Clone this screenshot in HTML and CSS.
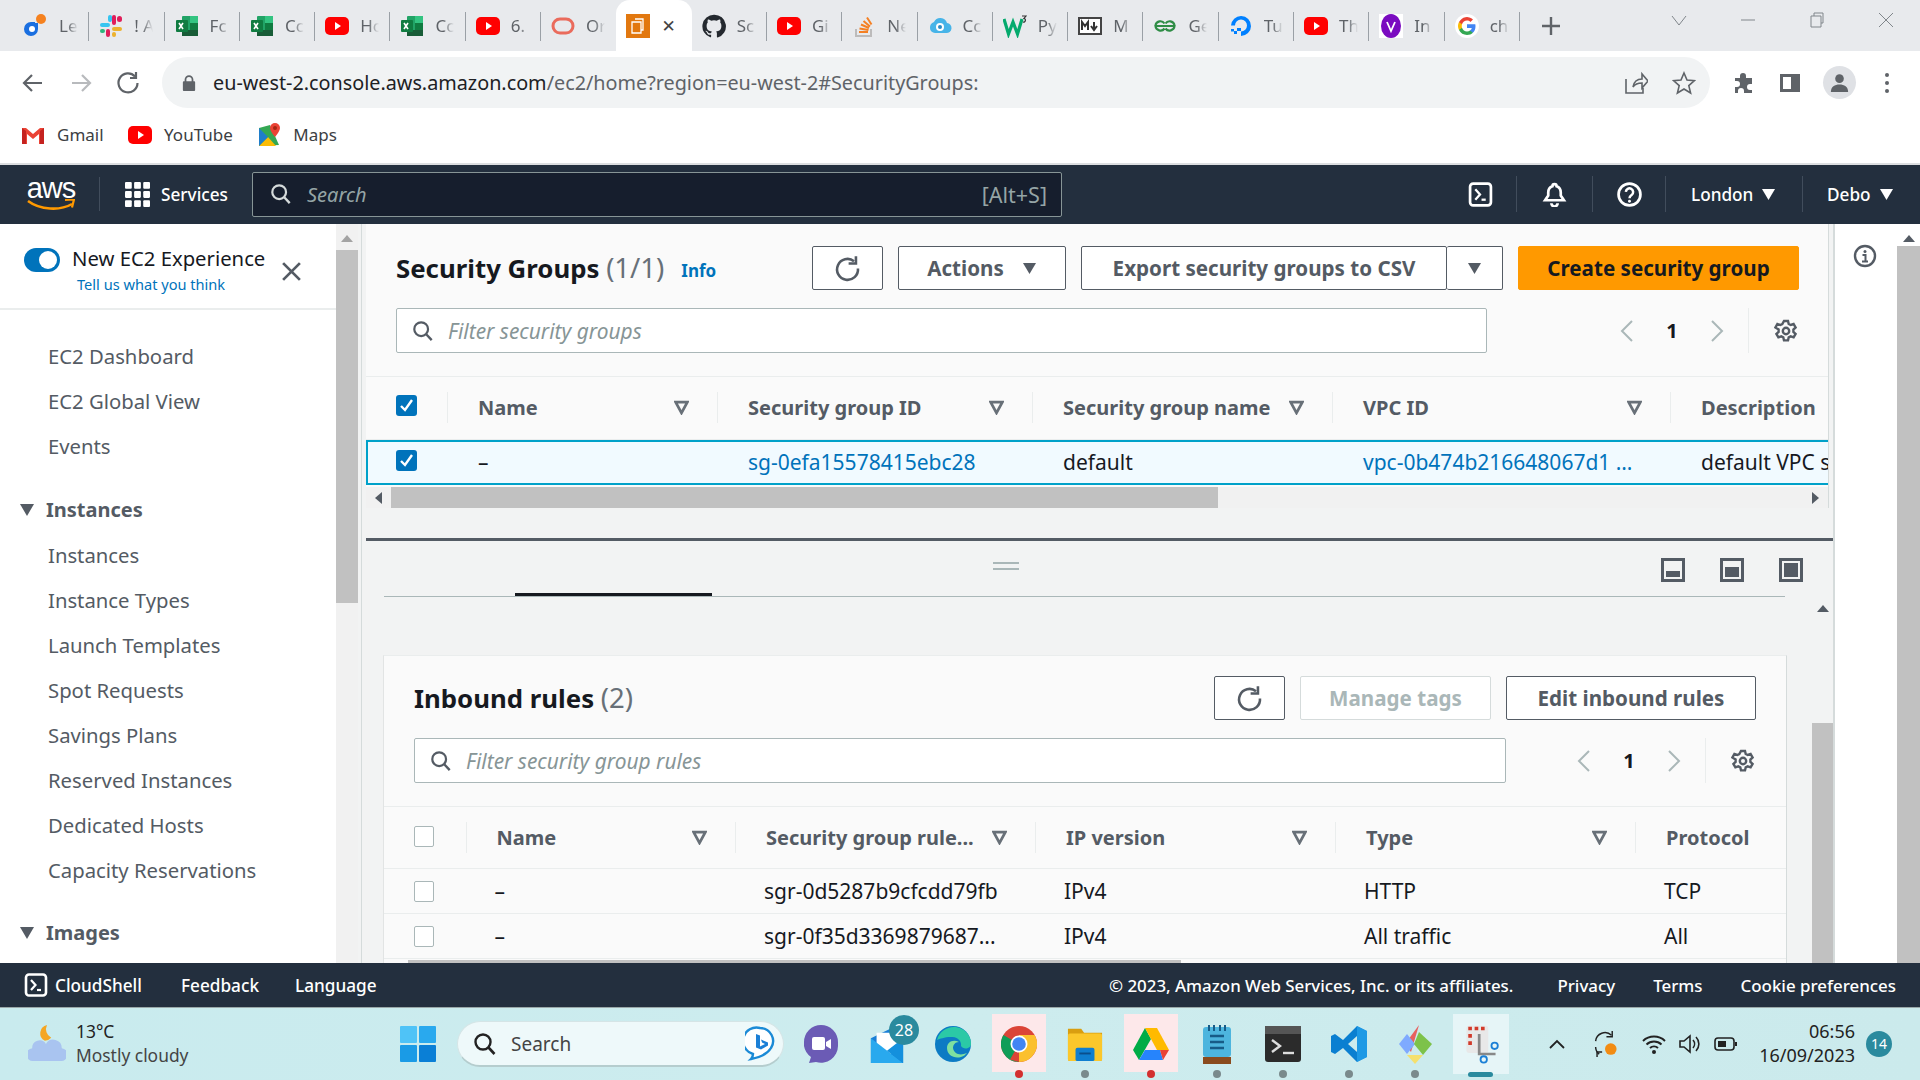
FILE: index.html
```html
<!DOCTYPE html>
<html lang="en">
<head>
<meta charset="utf-8">
<title>Security Groups | EC2</title>
<link rel="stylesheet" href="styles.css">
</head>
<body>
<svg class="defs" aria-hidden="true">
  <symbol id="i-excel" viewBox="0 0 24 24"><rect x="7" y="2" width="16" height="20" rx="1" fill="#21a366"/><rect x="15" y="2" width="8" height="7" fill="#33c481"/><rect x="15" y="9" width="8" height="7" fill="#107c41"/><rect x="7" y="16" width="16" height="6" fill="#185c37"/><rect x="1" y="6" width="12" height="12" rx="1" fill="#107c41"/><path d="M4 9l4 6M8 9l-4 6" stroke="#fff" stroke-width="1.6"/></symbol>
  <symbol id="i-yt" viewBox="0 0 24 24"><rect x="0" y="3" width="24" height="18" rx="5" fill="#f00"/><path d="M10 8l6 4-6 4z" fill="#fff"/></symbol>
  <symbol id="i-le" viewBox="0 0 24 24"><circle cx="17" cy="5" r="5" fill="#f58220"/><path d="M11 9h3v6a7 7 0 1 1-7-7h4z" fill="#1a6fe0"/><circle cx="8" cy="15" r="3" fill="#fff"/></symbol>
  <symbol id="i-slack" viewBox="0 0 24 24"><rect x="1" y="9" width="10" height="4" rx="2" fill="#36c5f0"/><rect x="9" y="1" width="4" height="7" rx="2" fill="#36c5f0"/><rect x="13" y="1" width="4" height="10" rx="2" fill="#e01e5a"/><rect x="18" y="2" width="5" height="6" rx="2.5" fill="#e01e5a"/><rect x="13" y="13" width="10" height="4" rx="2" fill="#ecb22e"/><rect x="7" y="15" width="4" height="8" rx="2" fill="#e01e5a"/><rect x="1" y="15" width="5" height="4" rx="2" fill="#2eb67d"/><rect x="13" y="18" width="4" height="5" rx="2" fill="#ecb22e"/></symbol>
  <symbol id="i-oracle" viewBox="0 0 24 24"><rect x="2" y="5" width="20" height="14" rx="7" fill="none" stroke="#ea6b5c" stroke-width="3"/></symbol>
  <symbol id="i-ec2" viewBox="0 0 24 24"><rect width="24" height="24" fill="#e2780f"/><path d="M9 5h8v11h-2M6 8h9v11H6z" fill="none" stroke="#fff" stroke-width="1.3"/></symbol>
  <symbol id="i-gh" viewBox="0 0 24 24"><path d="M12 .7a11.6 11.6 0 0 0-3.7 22.6c.6.1.8-.3.8-.6v-2c-3.2.7-3.9-1.5-3.9-1.5-.5-1.3-1.3-1.7-1.3-1.7-1-.7.1-.7.1-.7 1.2.1 1.8 1.2 1.8 1.2 1 1.8 2.7 1.3 3.4 1 .1-.8.4-1.3.7-1.6-2.6-.3-5.3-1.3-5.3-5.7 0-1.3.4-2.3 1.2-3.1-.1-.3-.5-1.500.1-3.1 0 0 1-.3 3.200 1.200a11 11 0 0 1 5.800 0c2.200-1.500 3.200-1.200 3.200-1.200.6 1.600.2 2.800.1 3.100.8.800 1.200 1.800 1.200 3.100 0 4.400-2.700 5.400-5.300 5.700.4.400.8 1.100.8 2.200v3.200c0 .3.2.7.800.6A11.600 11.600 0 0 0 12 .7z" fill="#24292f"/></symbol>
  <symbol id="i-so" viewBox="0 0 24 24"><path d="M4 15v7h15v-7" fill="none" stroke="#bcbbbb" stroke-width="2"/><path d="M7 18h9M7.500 14.500l9 1.500M9 10.500l8 3.500M11.500 7l6.500 5.500M15 3.500l4.500 7" stroke="#f48024" stroke-width="2"/></symbol>
  <symbol id="i-cc" viewBox="0 0 24 24"><path d="M2 14a6 6 0 0 1 4-6 7 7 0 0 1 13 1 5 5 0 0 1-1 10H7a5 5 0 0 1-5-5z" fill="#47b4e8"/><circle cx="12" cy="13" r="4" fill="#fff"/><circle cx="12" cy="13" r="2" fill="#2d8cc4"/></symbol>
  <symbol id="i-w3" viewBox="0 0 24 24"><path d="M1 5l4.500 15L10 8l4.500 12L19 5" fill="none" stroke="#04aa6d" stroke-width="3.200"/><path d="M19 2h4l-2 2.500c2 0 2 4-1 3.500" fill="none" stroke="#333" stroke-width="1.200"/></symbol>
  <symbol id="i-md" viewBox="0 0 24 24"><rect x="1" y="4" width="22" height="16" fill="#fff" stroke="#444" stroke-width="2"/><path d="M4 16V8l3 4 3-4v8M16 8v7m-3-3l3 4 3-4" fill="none" stroke="#333" stroke-width="2"/></symbol>
  <symbol id="i-gfg" viewBox="0 0 24 24"><path d="M12 12H2.500a5 5 0 0 0 9 2.500M12 12h9.500a5 5 0 0 1-9 2.500M11.500 9.500a5 5 0 0 0-9 1.500M12.500 9.500a5 5 0 0 1 9 1.500" fill="none" stroke="#2f8d46" stroke-width="2.200"/></symbol>
  <symbol id="i-do" viewBox="0 0 24 24"><path d="M12 22v-4.500a6 6 0 1 0-6-6H2a10 10 0 1 1 10 10.500z" fill="#0080ff"/><path d="M8 17h4v-3H8zM5 20h3v-3H5zM2 17.500h3V15H2z" fill="#0080ff"/></symbol>
  <symbol id="i-vp" viewBox="0 0 24 24"><rect width="24" height="24" fill="#fff"/><ellipse cx="12" cy="12" rx="10" ry="12" fill="#7a0bc0"/><path d="M8 8l4 9 4-9" fill="none" stroke="#fff" stroke-width="1.800"/></symbol>
  <symbol id="i-g" viewBox="0 0 24 24"><circle cx="12" cy="12" r="12" fill="#fff"/><path d="M20.500 12.200c0-.7-.1-1.300-.2-1.900H12v3.600h4.800a4 4 0 0 1-1.800 2.700v2.200h2.900c1.700-1.600 2.600-3.900 2.600-6.600z" fill="#4285f4"/><path d="M12 21c2.400 0 4.400-.8 5.900-2.200L15 16.600c-.8.500-1.800.9-3 .9-2.300 0-4.300-1.600-5-3.700H4v2.300A9 9 0 0 0 12 21z" fill="#34a853"/><path d="M7 13.800a5.400 5.400 0 0 1 0-3.500V8H4a9 9 0 0 0 0 8.100z" fill="#fbbc05"/><path d="M12 6.600c1.300 0 2.500.5 3.400 1.300L18 5.400A9 9 0 0 0 4 8l3 2.300c.7-2.100 2.700-3.700 5-3.700z" fill="#ea4335"/></symbol>
  <symbol id="i-search" viewBox="0 0 24 24"><circle cx="10" cy="10" r="7.500" fill="none" stroke="currentColor" stroke-width="2.400"/><path d="M15.500 15.500l6 6.500" stroke="currentColor" stroke-width="2.600" fill="none"/></symbol>
  <symbol id="i-shell" viewBox="0 0 24 24"><rect x="2" y="1.500" width="20" height="21" rx="3" fill="none" stroke="currentColor" stroke-width="2.600"/><path d="M7 7l4.500 5L7 17" fill="none" stroke="currentColor" stroke-width="2.200"/><path d="M13 17h4" stroke="currentColor" stroke-width="2.200"/></symbol>
  <symbol id="i-refresh" viewBox="0 0 24 24"><path d="M17.800 5.500A9.300 9.300 0 1 0 21.300 12" fill="none" stroke="currentColor" stroke-width="2.300"/><path d="M19.500 1v6.500H13" fill="none" stroke="currentColor" stroke-width="2.300"/></symbol>
  <symbol id="i-gear" viewBox="0 0 24 24"><path d="M10 2h4l.7 3 2 1 2.900-1 2 3.500-2.200 2v2.400l2.200 2-2 3.500-2.900-1-2 1-.7 3h-4l-.7-3-2-1-2.900 1-2-3.500 2.200-2v-2.400L1.400 8.500l2-3.500 2.900 1 2-1z" fill="none" stroke="currentColor" stroke-width="2.400"/><circle cx="12" cy="12" r="3.200" fill="none" stroke="currentColor" stroke-width="2.400"/></symbol>
  <symbol id="i-ftr" viewBox="0 0 14 14"><path d="M1.500 2h11L7 12z" fill="none" stroke="currentColor" stroke-width="2.600"/></symbol>
  <symbol id="i-tri" viewBox="0 0 14 14"><path d="M0 1h14L7 13z" fill="currentColor"/></symbol>
  <symbol id="i-check" viewBox="0 0 21 21"><rect width="21" height="21" rx="3" fill="#0073bb"/><path d="M5 11l4 4 7-10" fill="none" stroke="#fff" stroke-width="2.400"/></symbol>
  <symbol id="i-left" viewBox="0 0 14 24"><path d="M12 2L2 12l10 10" fill="none" stroke="currentColor" stroke-width="2"/></symbol>
  <symbol id="i-right" viewBox="0 0 14 24"><path d="M2 2l10 10L2 22" fill="none" stroke="currentColor" stroke-width="2"/></symbol>
  <symbol id="i-info" viewBox="0 0 24 24"><circle cx="12" cy="12" r="10" fill="none" stroke="currentColor" stroke-width="2.400"/><circle cx="12" cy="7.500" r="1.500" fill="currentColor"/><path d="M9.500 11h3v6M9 17.500h6" fill="none" stroke="currentColor" stroke-width="2"/></symbol>
  <symbol id="i-bell" viewBox="0 0 24 24"><path d="M12 2a2 2 0 0 1 2 2c3 1 4 3.500 4 6v3l3 4.500H3L6 13v-3c0-2.500 1-5 4-6a2 2 0 0 1 2-2z" fill="none" stroke="currentColor" stroke-width="2.600"/><path d="M9 20.500a3 3 0 0 0 6 0" fill="none" stroke="currentColor" stroke-width="2.600"/></symbol>
  <symbol id="i-help" viewBox="0 0 24 24"><circle cx="12" cy="12" r="10.500" fill="none" stroke="currentColor" stroke-width="2.600"/><path d="M8.500 9.500a3.500 3.500 0 1 1 5.500 3c-1.300.9-2 1.500-2 3" fill="none" stroke="currentColor" stroke-width="2.400"/><circle cx="12" cy="18.500" r="1.400" fill="currentColor"/></symbol>
  <symbol id="i-grid" viewBox="0 0 24 24"><g fill="currentColor"><rect x="0" y="0" width="6.500" height="6.500" rx="1"/><rect x="8.750" y="0" width="6.500" height="6.500" rx="1"/><rect x="17.500" y="0" width="6.500" height="6.500" rx="1"/><rect x="0" y="8.750" width="6.500" height="6.500" rx="1"/><rect x="8.750" y="8.750" width="6.500" height="6.500" rx="1"/><rect x="17.500" y="8.750" width="6.500" height="6.500" rx="1"/><rect x="0" y="17.500" width="6.500" height="6.500" rx="1"/><rect x="8.750" y="17.500" width="6.500" height="6.500" rx="1"/><rect x="17.500" y="17.500" width="6.500" height="6.500" rx="1"/></g></symbol>
  <symbol id="i-lay1" viewBox="0 0 24 24"><rect x="1.500" y="1.500" width="21" height="21" fill="none" stroke="currentColor" stroke-width="3"/><rect x="5" y="13" width="14" height="6" fill="currentColor"/></symbol>
  <symbol id="i-lay2" viewBox="0 0 24 24"><rect x="1.500" y="1.500" width="21" height="21" fill="none" stroke="currentColor" stroke-width="3"/><rect x="5" y="9" width="14" height="10" fill="currentColor"/></symbol>
  <symbol id="i-lay3" viewBox="0 0 24 24"><rect x="1.500" y="1.500" width="21" height="21" fill="none" stroke="currentColor" stroke-width="3"/><rect x="5" y="5" width="14" height="14" fill="currentColor"/></symbol>
  <symbol id="i-gmail" viewBox="0 0 24 24"><path d="M1 5h4l7 6 7-6h4v16h-5V11l-6 5-6-5v10H1z" fill="#ea4335"/><path d="M1 21V5l4 3v13z" fill="#c5221f"/><path d="M23 21V5l-4 3v13z" fill="#c5221f"/></symbol>
  <symbol id="i-maps" viewBox="0 0 24 24"><path d="M2 5l11-3 9 20-20 1z" fill="#34a853"/><path d="M2 23l9-9 8 9z" fill="#fbbc05"/><path d="M2 5l9 9-9 9z" fill="#1a73e8" opacity=".8"/><path d="M18 0a5 5 0 0 0-5 5c0 3 5 9 5 9s5-6 5-9a5 5 0 0 0-5-5z" fill="#ea4335"/><circle cx="18" cy="5" r="2" fill="#a52714"/></symbol>
  <symbol id="i-cloud" viewBox="0 0 36 40"><path d="M18 2a8 8 0 0 0-2 15 10 10 0 0 0 6-3 9 9 0 0 1-4-12z" fill="#f5a623"/><path d="M5 36a6 6 0 0 1-1-12 7 7 0 0 1 13-4 8 8 0 0 1 15 4 6 6 0 0 1-1 12z" fill="#a9c4f0"/></symbol>
  <symbol id="i-win" viewBox="0 0 36 36"><rect width="17" height="17" rx="1" fill="#4fc3f7"/><rect x="19" width="17" height="17" rx="1" fill="#29a9ee"/><rect y="19" width="17" height="17" rx="1" fill="#1a9be6"/><rect x="19" y="19" width="17" height="17" rx="1" fill="#0a7fd6"/></symbol>
  <symbol id="i-bing" viewBox="0 0 30 36"><path d="M15 2a13 13 0 0 1 11 20c-3 5-9 9-20 11 2-2 2-4 2-5A13 13 0 0 1 15 2z" fill="#fff" stroke="#1b8ad6" stroke-width="2.400"/><path d="M11 8l4 1.500v11l5-2.500-3-1.500-1-3 7 3v3l-7 4-5-2z" fill="#1b7fd6"/></symbol>
  <symbol id="i-teams" viewBox="0 0 36 40"><path d="M18 1a17 17 0 0 1 17 17v4a17 17 0 0 1-22 16l-7 1 2-6A17 17 0 0 1 1 22v-4A17 17 0 0 1 18 1z" fill="#6b5bb5"/><rect x="9" y="13" width="13" height="13" rx="2" fill="#fff"/><path d="M23 18l5-3v10l-5-3z" fill="#fff"/></symbol>
  <symbol id="i-mail" viewBox="0 0 38 40"><path d="M2 14L24 3l12 11v26H2z" fill="#1a7fd6"/><path d="M8 8h24v18L20 32 8 26z" fill="#fff"/><path d="M2 14l34 26H2z" fill="#29a9ee"/><path d="M36 14v26L19 27z" fill="#1490dd"/></symbol>
  <symbol id="i-edge" viewBox="0 0 36 36"><circle cx="18" cy="18" r="18" fill="#0c7bc4"/><path d="M2 14C5 3 17-2 27 3c6 3 9 9 9 15 0 5-8 6-10 2 1-4-3-10-10-9C9 11 5 13 2 14z" fill="#2bc9a6"/><path d="M12 22c0 7 7 11 14 9 3-1 4-2 6-4-7 3-13 1-14-5 0-3 2-6 6-6-6-3-12 0-12 6z" fill="#7fe0a0"/></symbol>
  <symbol id="i-chrome" viewBox="0 0 36 36"><circle cx="18" cy="18" r="18" fill="#db4437"/><path d="M18 36A18 18 0 0 1 2.400 9L18 18l-9 15.600z" fill="#0f9d58"/><path d="M18 36a18 18 0 0 0 15.600-27H18z" fill="#fbc02d"/><circle cx="18" cy="18" r="8.500" fill="#fff"/><circle cx="18" cy="18" r="6.800" fill="#4285f4"/></symbol>
  <symbol id="i-folder" viewBox="0 0 38 36"><path d="M1 2h14l3 4h19v28a2 2 0 0 1-2 2H3a2 2 0 0 1-2-2z" fill="#d99e10"/><rect x="1" y="7" width="36" height="29" rx="2" fill="#fbc72b"/><rect x="9" y="22" width="20" height="14" rx="2" fill="#0f7ed0"/><rect x="13" y="27" width="12" height="2" fill="#0a4e8c"/></symbol>
  <symbol id="i-drive" viewBox="0 0 36 36"><path d="M12 2L0 24l6 10 12-21z" fill="#00ac47"/><path d="M12 2h12l12 22H24z" fill="#ffba00"/><path d="M6 34l6-10h15l3 10z" fill="#2684fc"/><path d="M27 24h9l-6 10z" fill="#ea4335"/></symbol>
  <symbol id="i-note" viewBox="0 0 30 40"><rect x="1" y="3" width="28" height="30" rx="3" fill="#4db5de"/><rect x="1" y="33" width="28" height="7" fill="#8a4b1e"/><path d="M7 1v6M12 1v6M18 1v6M23 1v6" stroke="#175b87" stroke-width="2"/><path d="M8 12h14M8 18h14M8 24h14" stroke="#175b87" stroke-width="2.400"/></symbol>
  <symbol id="i-term" viewBox="0 0 36 36"><rect width="36" height="36" rx="3" fill="#2b2b2b"/><rect width="36" height="8" fill="#555"/><path d="M7 14l8 6-8 6" fill="none" stroke="#ddd" stroke-width="2.400"/><path d="M18 27h11" stroke="#ddd" stroke-width="2.400"/></symbol>
  <symbol id="i-vscode" viewBox="0 0 36 38"><path d="M26 1l10 5v26l-10 5-14-14-8 6-4-2v-16l4-2 8 6zM26 11l-9 8 9 8z" fill="#0a7fd1"/><path d="M26 1l10 5v26l-10 5z" fill="#26a4ee" opacity=".7"/></symbol>
  <symbol id="i-git" viewBox="0 0 36 40"><path d="M17 1L3 20l6 8z" fill="#e7615f" transform="translate(5 0)"/><path d="M2 20l8-10 8 10-8 10z" fill="#7faaff"/><path d="M22 8l13 12-9 11-9-11z" fill="#7dc24a"/><path d="M10 31h16l-8 9z" fill="#f5e06d"/></symbol>
  <symbol id="i-snip" viewBox="0 0 36 44"><rect x="2" y="2" width="24" height="30" rx="3" fill="#e8e8e8"/><path d="M4 3h4v4H4zM11 3h4v4h-4zM18 3h4v4h-4zM4 11h4v4H4zM4 19h4v4H4z" fill="#d13a2a"/><path d="M16 11v22h18" fill="none" stroke="#888" stroke-width="3"/><circle cx="33" cy="24" r="3.500" fill="none" stroke="#1b7fd6" stroke-width="2"/><circle cx="21" cy="39" r="3.500" fill="none" stroke="#1b7fd6" stroke-width="2"/></symbol>
  <symbol id="i-sync" viewBox="0 0 36 40"><path d="M5 16a13 13 0 0 1 22-8M10 34A13 13 0 0 1 5 24" fill="none" stroke="#222" stroke-width="2"/><path d="M28 2v8h-8M7 38v-7h7" fill="none" stroke="#222" stroke-width="2"/><circle cx="26" cy="27" r="8" fill="#f28c13"/></symbol>
  <symbol id="i-wifi" viewBox="0 0 24 24"><path d="M1 9a16 16 0 0 1 22 0M4.500 12.500a11 11 0 0 1 15 0M8 16a6 6 0 0 1 8 0" fill="none" stroke="#222" stroke-width="2"/><circle cx="12" cy="20" r="2" fill="#222"/></symbol>
  <symbol id="i-vol" viewBox="0 0 24 24"><path d="M2 9h4l6-5v16l-6-5H2z" fill="none" stroke="#222" stroke-width="1.600"/><path d="M15 8a6 6 0 0 1 0 8M18 5a10 10 0 0 1 0 14" fill="none" stroke="#222" stroke-width="1.600"/></symbol>
  <symbol id="i-batt" viewBox="0 0 24 24"><rect x="1" y="6" width="19" height="12" rx="3" fill="none" stroke="#222" stroke-width="1.600"/><rect x="4" y="9" width="8" height="6" fill="#222"/><rect x="21" y="10" width="2" height="4" fill="#222"/></symbol>
</svg>

<div class="screen">
  <div class="tabstrip">
    <div class="tab"><svg class="fav"><use href="#i-le"/></svg><span class="tab-t">Le</span></div>
    <div class="tab"><svg class="fav"><use href="#i-slack"/></svg><span class="tab-t">! A</span></div>
    <div class="tab"><svg class="fav"><use href="#i-excel"/></svg><span class="tab-t">Fc</span></div>
    <div class="tab"><svg class="fav"><use href="#i-excel"/></svg><span class="tab-t">Cc</span></div>
    <div class="tab"><svg class="fav"><use href="#i-yt"/></svg><span class="tab-t">Hc</span></div>
    <div class="tab"><svg class="fav"><use href="#i-excel"/></svg><span class="tab-t">Cc</span></div>
    <div class="tab"><svg class="fav"><use href="#i-yt"/></svg><span class="tab-t">6.</span></div>
    <div class="tab no-sep"><svg class="fav"><use href="#i-oracle"/></svg><span class="tab-t">Or</span></div>
    <div class="tab tab-active"><svg class="fav"><use href="#i-ec2"/></svg><span class="tab-x">✕</span></div>
    <div class="tab tab-next"><svg class="fav"><use href="#i-gh"/></svg><span class="tab-t">Sc</span></div>
    <div class="tab"><svg class="fav"><use href="#i-yt"/></svg><span class="tab-t">Gi</span></div>
    <div class="tab"><svg class="fav"><use href="#i-so"/></svg><span class="tab-t">Ne</span></div>
    <div class="tab"><svg class="fav"><use href="#i-cc"/></svg><span class="tab-t">Cc</span></div>
    <div class="tab"><svg class="fav"><use href="#i-w3"/></svg><span class="tab-t">Py</span></div>
    <div class="tab"><svg class="fav"><use href="#i-md"/></svg><span class="tab-t">M</span></div>
    <div class="tab"><svg class="fav"><use href="#i-gfg"/></svg><span class="tab-t">Ge</span></div>
    <div class="tab"><svg class="fav"><use href="#i-do"/></svg><span class="tab-t">Tu</span></div>
    <div class="tab"><svg class="fav"><use href="#i-yt"/></svg><span class="tab-t">Th</span></div>
    <div class="tab"><svg class="fav"><use href="#i-vp"/></svg><span class="tab-t">In</span></div>
    <div class="tab"><svg class="fav"><use href="#i-g"/></svg><span class="tab-t">ch</span></div>
    <span class="tab-plus">
      <svg class="ic-plus" viewBox="0 0 20 20"><path d="M10 1v18M1 10h18"/></svg>
    </span>
    <div class="winctl">
      <svg class="wc" viewBox="0 0 16 16"><path d="M1 4l7 9 7-9"/></svg>
      <svg class="wc" viewBox="0 0 16 16"><path d="M1 8h14"/></svg>
      <svg class="wc" viewBox="0 0 16 16"><path d="M2 4h10v11H2zM5 4V1h9v10h-2"/></svg>
      <svg class="wc" viewBox="0 0 16 16"><path d="M1 1l14 14M15 1L1 15"/></svg>
    </div>
  </div>

  <div class="toolbar">
    <svg class="tb-ic tb-back" viewBox="0 0 24 24"><path d="M21 12H4M11 4l-8 8 8 8"/></svg>
    <svg class="tb-ic tb-off" viewBox="0 0 24 24"><path d="M3 12h17M13 4l8 8-8 8"/></svg>
    <svg class="tb-ic tb-reload" viewBox="0 0 24 24"><path d="M19 5.500A9.500 9.500 0 1 0 21.500 12M20 1v6h-6"/></svg>
    <div class="omni">
      <svg class="lock" viewBox="0 0 16 20"><path d="M3 8V6a5 5 0 0 1 10 0v2h1a1 1 0 0 1 1 1v9a1 1 0 0 1-1 1H2a1 1 0 0 1-1-1V9a1 1 0 0 1 1-1zm2 0h6V6a3 3 0 0 0-6 0z"/></svg>
      <span class="url"><span class="url-host">eu-west-2.console.aws.amazon.com</span>/ec2/home?region=eu-west-2#SecurityGroups:</span>
      <svg class="omni-ic" viewBox="0 0 24 24"><path d="M2 8v14h17v-5M9 16c1-6 5-8 9-8V3l6 7-6 7v-5c-4 0-7 1-9 4z"/></svg>
      <svg class="omni-ic omni-star" viewBox="0 0 24 24"><path d="M12 2l3 7 7.500.6-5.700 5 1.800 7.400L12 18l-6.600 4 1.800-7.400-5.700-5L9 9z"/></svg>
    </div>
    <svg class="tb-solid" viewBox="0 0 24 24"><path d="M3 7h5V5a3 3 0 0 1 6 0v2h6v6h-2a3 3 0 0 0 0 6h2v3h-8v-2a3 3 0 0 0-6 0v2H3v-6h2a3 3 0 0 0 0-6H3z"/></svg>
    <svg class="tb-solid" viewBox="0 0 24 24"><path d="M2 3h20v18H2zm3 3v12h8V6z"/></svg>
    <span class="avatar"><svg class="avatar-i" viewBox="0 0 24 24"><circle cx="12" cy="8" r="4.500"/><path d="M3 22c0-6 4-8 9-8s9 2 9 8z"/></svg></span>
    <span class="kebab"><i></i><i></i><i></i></span>
  </div>

  <div class="bookmarks">
    <span class="bm"><svg class="bm-i"><use href="#i-gmail"/></svg>Gmail</span>
    <span class="bm"><svg class="bm-i"><use href="#i-yt"/></svg>YouTube</span>
    <span class="bm"><svg class="bm-i"><use href="#i-maps"/></svg>Maps</span>
  </div>

  <header class="awsnav">
    <div class="aws-logo">
      <span class="aws-word">aws</span>
      <svg class="aws-smile" viewBox="0 0 48 12"><path d="M1 2c12 9 32 10 44 3" fill="none" stroke="#f90" stroke-width="2.600"/><path d="M38 1l9-.5-2 8" fill="none" stroke="#f90" stroke-width="2.200"/></svg>
    </div>
    <span class="nav-div nav-div-a"></span>
    <svg class="nav-grid"><use href="#i-grid"/></svg>
    <span class="nav-services">Services</span>
    <div class="nav-search">
      <svg class="nav-s-i"><use href="#i-search"/></svg>
      <span class="nav-s-t">Search</span>
      <span class="nav-s-k">[Alt+S]</span>
    </div>
    <div class="nav-right">
      <span class="nav-cell nav-c1"><svg class="nav-i"><use href="#i-shell"/></svg></span>
      <span class="nav-cell nav-c2"><svg class="nav-i"><use href="#i-bell"/></svg></span>
      <span class="nav-cell nav-c3"><svg class="nav-i"><use href="#i-help"/></svg></span>
      <span class="nav-cell nav-c4">London<svg class="nav-tri"><use href="#i-tri"/></svg></span>
      <span class="nav-cell nav-c5">Debo<svg class="nav-tri"><use href="#i-tri"/></svg></span>
    </div>
  </header>

  <div class="workspace">
    <aside class="sidebar">
      <div class="exp">
        <span class="toggle"><i></i></span>
        <div class="exp-t">
          <div class="exp-name">New EC2 Experience</div>
          <div class="exp-link">Tell us what you think</div>
        </div>
        <svg class="exp-x" viewBox="0 0 20 20"><path d="M2 2l16 16M18 2L2 18"/></svg>
      </div>
      <nav class="side-list">
        <a class="si">EC2 Dashboard</a>
        <a class="si">EC2 Global View</a>
        <a class="si">Events</a>
        <div class="sh"><svg class="sh-t"><use href="#i-tri"/></svg>Instances</div>
        <a class="si">Instances</a>
        <a class="si">Instance Types</a>
        <a class="si">Launch Templates</a>
        <a class="si">Spot Requests</a>
        <a class="si">Savings Plans</a>
        <a class="si">Reserved Instances</a>
        <a class="si">Dedicated Hosts</a>
        <a class="si">Capacity Reservations</a>
        <div class="sh"><svg class="sh-t"><use href="#i-tri"/></svg>Images</div>
      </nav>
    </aside>
    <div class="vbar vbar-side"><span class="arr"></span><span class="thumb"></span></div>
    <div class="side-gap"></div>

    <main class="content">
      <section class="top-panel">
        <div class="phead">
          <div class="prow">
            <h1 class="ttl">Security Groups <span class="cnt">(1/1)</span></h1>
            <a class="info">Info</a>
            <div class="btns">
              <button class="btn btn-ic"><svg class="b-ref"><use href="#i-refresh"/></svg></button>
              <button class="btn btn-act">Actions<svg class="b-tri"><use href="#i-tri"/></svg></button>
              <div class="split">
                <button class="btn btn-exp">Export security groups to CSV</button>
                <button class="btn btn-dd"><svg class="b-tri"><use href="#i-tri"/></svg></button>
              </div>
              <button class="btn btn-pri">Create security group</button>
            </div>
          </div>
          <div class="prow prow-2">
            <div class="filter filter-a"><svg class="f-i"><use href="#i-search"/></svg><span class="f-t">Filter security groups</span></div>
            <div class="pager pager-a">
              <svg class="p-ar"><use href="#i-left"/></svg><span class="p-n">1</span><svg class="p-ar"><use href="#i-right"/></svg>
              <span class="p-div"></span><svg class="p-gear"><use href="#i-gear"/></svg>
            </div>
          </div>
        </div>
        <div class="tr thead sgcols">
          <div class="td td-c"><svg class="chk"><use href="#i-check"/></svg></div>
          <div class="td">Name<svg class="ftr"><use href="#i-ftr"/></svg></div>
          <div class="td">Security group ID<svg class="ftr"><use href="#i-ftr"/></svg></div>
          <div class="td">Security group name<svg class="ftr"><use href="#i-ftr"/></svg></div>
          <div class="td">VPC ID<svg class="ftr"><use href="#i-ftr"/></svg></div>
          <div class="td">Description</div>
        </div>
        <div class="tr tsel sgcols">
          <div class="td td-c"><svg class="chk"><use href="#i-check"/></svg></div>
          <div class="td">–</div>
          <div class="td td-link">sg-0efa15578415ebc28</div>
          <div class="td">default</div>
          <div class="td td-link">vpc-0b474b216648067d1 …</div>
          <div class="td td-clip">default VPC security group</div>
        </div>
        <div class="hbar"><span class="h-l"></span><span class="h-th"></span><span class="h-r"></span></div>
      </section>
      <div class="band"></div>
      <section class="bottom-panel">
        <div class="split-head">
          <span class="handle"></span>
          <div class="lays">
            <svg class="lay"><use href="#i-lay1"/></svg>
            <svg class="lay"><use href="#i-lay2"/></svg>
            <svg class="lay"><use href="#i-lay3"/></svg>
          </div>
        </div>
        <div class="tabline"><span class="tabline-on"></span></div>
        <div class="split-body">
          <div class="card">
            <div class="phead">
              <div class="prow">
                <h2 class="ttl">Inbound rules <span class="cnt">(2)</span></h2>
                <div class="btns">
                  <button class="btn btn-ic"><svg class="b-ref"><use href="#i-refresh"/></svg></button>
                  <button class="btn btn-mng">Manage tags</button>
                  <button class="btn btn-edit">Edit inbound rules</button>
                </div>
              </div>
              <div class="prow prow-2">
                <div class="filter filter-b"><svg class="f-i"><use href="#i-search"/></svg><span class="f-t">Filter security group rules</span></div>
                <div class="pager pager-a">
                  <svg class="p-ar"><use href="#i-left"/></svg><span class="p-n">1</span><svg class="p-ar"><use href="#i-right"/></svg>
                  <span class="p-div"></span><svg class="p-gear"><use href="#i-gear"/></svg>
                </div>
              </div>
            </div>
            <div class="tr thead rcols">
              <div class="td td-c"><span class="box"></span></div>
              <div class="td">Name<svg class="ftr"><use href="#i-ftr"/></svg></div>
              <div class="td">Security group rule...<svg class="ftr"><use href="#i-ftr"/></svg></div>
              <div class="td">IP version<svg class="ftr"><use href="#i-ftr"/></svg></div>
              <div class="td">Type<svg class="ftr"><use href="#i-ftr"/></svg></div>
              <div class="td">Protocol</div>
            </div>
            <div class="tr trow rcols">
              <div class="td td-c"><span class="box"></span></div>
              <div class="td">–</div><div class="td">sgr-0d5287b9cfcdd79fb</div><div class="td">IPv4</div><div class="td">HTTP</div><div class="td">TCP</div>
            </div>
            <div class="tr trow rcols">
              <div class="td td-c"><span class="box"></span></div>
              <div class="td">–</div><div class="td">sgr-0f35d3369879687...</div><div class="td">IPv4</div><div class="td">All traffic</div><div class="td">All</div>
            </div>
            <div class="card-thumb"></div>
          </div>
          <div class="vbar vbar-in"><span class="arr"></span><span class="thumb"></span></div>
        </div>
      </section>
    </main>

    <div class="rail"><svg class="rail-i"><use href="#i-info"/></svg></div>
    <div class="vbar vbar-rail"><span class="arr"></span><span class="thumb"></span></div>
  </div>

  <footer class="awsfoot">
    <svg class="foot-i"><use href="#i-shell"/></svg>
    <span class="ft ft-shell">CloudShell</span>
    <span class="ft ft-fb">Feedback</span>
    <span class="ft">Language</span>
    <span class="ft ft-c">© 2023, Amazon Web Services, Inc. or its affiliates.</span>
    <span class="ft ft-p">Privacy</span>
    <span class="ft ft-tm">Terms</span>
    <span class="ft ft-ck">Cookie preferences</span>
  </footer>

  <div class="taskbar">
    <svg class="w-i"><use href="#i-cloud"/></svg>
    <div class="w-t"><div>13°C</div><div class="w-d">Mostly cloudy</div></div>
    <svg class="win"><use href="#i-win"/></svg>
    <div class="t-search">
      <svg class="ts-i"><use href="#i-search"/></svg><span class="ts-t">Search</span>
      <svg class="ts-b"><use href="#i-bing"/></svg>
    </div>
    <div class="apps">
      <span class="app"><svg class="app-i"><use href="#i-teams"/></svg></span>
      <span class="app"><svg class="app-i"><use href="#i-mail"/></svg><span class="mail-b">28</span></span>
      <span class="app"><svg class="app-i"><use href="#i-edge"/></svg></span>
      <span class="app app-pink dot-r"><svg class="app-i"><use href="#i-chrome"/></svg></span>
      <span class="app dot-g"><svg class="app-i"><use href="#i-folder"/></svg></span>
      <span class="app app-pink dot-r"><svg class="app-i"><use href="#i-drive"/></svg></span>
      <span class="app dot-g"><svg class="app-i"><use href="#i-note"/></svg></span>
      <span class="app dot-g"><svg class="app-i"><use href="#i-term"/></svg></span>
      <span class="app dot-g"><svg class="app-i"><use href="#i-vscode"/></svg></span>
      <span class="app dot-g"><svg class="app-i"><use href="#i-git"/></svg></span>
      <span class="app app-on"><svg class="app-i"><use href="#i-snip"/></svg></span>
    </div>
    <div class="tray">
      <svg class="tray-up" viewBox="0 0 16 10"><path d="M1 9l7-7 7 7"/></svg>
      <svg class="tray-sync"><use href="#i-sync"/></svg>
      <svg class="tray-i"><use href="#i-wifi"/></svg>
      <svg class="tray-i"><use href="#i-vol"/></svg>
      <svg class="tray-i"><use href="#i-batt"/></svg>
    </div>
    <div class="clock"><div>06:56</div><div>16/09/2023</div></div>
    <span class="notif">14</span>
  </div>
</div>
</body>
</html>
```

FILE: styles.css
```css
* { box-sizing: border-box; }
html, body { margin: 0; padding: 0; }
body { font-family: "Noto Sans", "Open Sans", sans-serif; color: #16191f; overflow: hidden; }
.defs { position: absolute; width: 0; height: 0; }
.screen { width: 1920px; height: 1080px; display: flex; flex-direction: column; overflow: hidden; background: #fff; }

/* browser tabs */
.tabstrip { height: 51px; background: #e8eaed; display: flex; padding-left: 14px; flex: none; }
.tab { width: 75.3px; height: 51px; display: flex; align-items: center; padding: 0 0 0 10px; flex: none; position: relative; color: #5f6368; font-size: 17px; }
.tab::after { content: ""; position: absolute; right: 0; top: 12px; height: 29px; width: 1px; background: #9aa0a6; }
.tab.no-sep::after, .tab-active::after { display: none; }
.tab-active { background: #fff; border-radius: 14px 14px 0 0; color: #3c4043; }
.fav { width: 24px; height: 24px; flex: none; }
.tab-t { margin-left: 11px; min-width: 28px; white-space: nowrap; -webkit-mask-image: linear-gradient(90deg, #000 30%, transparent 68%); mask-image: linear-gradient(90deg, #000 30%, transparent 68%); }
.tab-x { margin-left: 11px; font-size: 17px; font-family: "DejaVu Sans", sans-serif; color: #444; }
.tab-plus { margin-left: 21px; height: 51px; display: flex; align-items: center; }
.ic-plus { width: 20px; height: 20px; fill: none; stroke: #5f6368; stroke-width: 2.400; }
.winctl { display: flex; align-items: center; margin-left: 110px; gap: 53px; height: 45px; margin-top: -3px; }
.wc { width: 16px; height: 16px; fill: none; stroke: #80868b; stroke-width: 1; }

/* browser toolbar */
.toolbar { height: 57px; display: flex; align-items: center; flex: none; padding: 6px 0 0 21px; background: #fff; }
.tb-ic { width: 24px; height: 24px; fill: none; stroke: #5f6368; stroke-width: 2.200; flex: none; }
.tb-back { margin-right: 24px; }
.tb-ic.tb-off { stroke: #b8babd; margin-right: 23px; }
.tb-reload { margin-right: 22px; }
.omni { width: 1548px; height: 51px; background: #f1f3f4; border-radius: 26px; display: flex; align-items: center; padding-left: 20px; flex: none; }
.lock { width: 14px; height: 18px; fill: #5f6368; flex: none; }
.url { margin-left: 17px; font-size: 19.800px; color: #5f6368; white-space: nowrap; flex: 1; }
.url-host { color: #202124; }
.omni-ic { width: 24px; height: 24px; fill: none; stroke: #5f6368; stroke-width: 1.600; margin-right: 24px; flex: none; }
.omni-star { margin-right: 14px; }
.tb-solid { width: 24px; height: 24px; fill: #5f6368; flex: none; margin-left: 22px; }
.avatar { width: 33px; height: 33px; border-radius: 50%; background: #dfe1e5; margin-left: 21px; display: flex; align-items: center; justify-content: center; flex: none; }
.avatar-i { width: 23px; height: 23px; fill: #5f6368; }
.kebab { display: flex; flex-direction: column; gap: 4px; margin-left: 29px; }
.kebab i { width: 4px; height: 4px; border-radius: 50%; background: #5f6368; display: block; }

/* bookmarks */
.bookmarks { height: 55px; display: flex; align-items: center; flex: none; padding: 0 0 2px 21px; font-size: 17px; color: #3c4043; gap: 24.500px; background: #fff; }
.bm { display: flex; align-items: center; gap: 12px; white-space: nowrap; }
.bm-i { width: 24px; height: 24px; flex: none; }

/* aws nav */
.awsnav { height: 61px; background: #232f3e; border-top: 2px solid #dcdee0; display: flex; align-items: center; color: #fff; flex: none; font-size: 17.200px; padding-bottom: 1px; }
.aws-logo { width: 48px; margin-left: 27px; display: flex; flex-direction: column; align-items: center; flex: none; }
.aws-word { font: 400 29px/22px "Liberation Sans", sans-serif; letter-spacing: -1px; height: 23px; }
.aws-smile { width: 48px; height: 12px; margin-top: -1px; }
.nav-div { width: 1px; height: 34px; background: #414d5c; flex: none; }
.nav-div-a { margin-left: 24px; }
.nav-grid { width: 25px; height: 25px; margin-left: 25px; color: #fff; flex: none; }
.nav-services { margin-left: 11px; font-weight: 500; width: 91px; }
.nav-search { width: 810px; height: 45px; background: #161e2d; border: 1px solid #879596; border-radius: 2px; display: flex; align-items: center; padding: 0 14px 0 17px; flex: none; }
.nav-s-i { width: 22px; height: 22px; color: #d5dbdb; flex: none; }
.nav-s-t { margin-left: 15px; font-style: italic; font-size: 20px; color: #95a5a6; flex: 1; }
.nav-s-k { font-size: 21.500px; color: #95a5a6; }
.nav-right { display: flex; flex: 1; height: 36px; }
.nav-cell { display: flex; align-items: center; justify-content: center; flex: none; white-space: nowrap; font-weight: 500; border-left: 1px solid #414d5c; }
.nav-c1 { width: 454px; border-left: 0; padding-left: 383px; }
.nav-c2 { width: 76px; }
.nav-c3 { width: 73px; }
.nav-c4 { width: 137px; justify-content: flex-start; padding-left: 25px; }
.nav-c5 { width: 117px; justify-content: flex-start; padding-left: 24px; }
.nav-i { width: 25px; height: 25px; color: #fff; }
.nav-tri { width: 13px; height: 13px; color: #fff; margin-left: 9px; }

/* workspace */
.workspace { height: 739px; display: flex; flex: none; background: #f2f3f3; overflow: hidden; }
.sidebar { width: 336px; background: #fff; flex: none; overflow: hidden; }
.exp { height: 86px; border-bottom: 2px solid #eaeded; display: flex; padding: 24px 0 0 24px; }
.toggle { width: 36px; height: 24px; border-radius: 12px; background: #0073bb; display: flex; align-items: center; justify-content: flex-end; padding-right: 3px; flex: none; }
.toggle i { width: 18px; height: 18px; border-radius: 50%; background: #fff; display: block; }
.exp-t { margin-left: 12px; width: 206px; }
.exp-name { font-size: 20.300px; line-height: 24px; color: #16191f; white-space: nowrap; margin-top: -2px; }
.exp-link { font-size: 14.600px; line-height: 20px; color: #0073bb; margin: 4px 0 0 5px; white-space: nowrap; }
.exp-x { width: 21px; height: 21px; fill: none; stroke: #545b64; stroke-width: 2.600; margin: 13px 0 0 3px; }
.side-list { padding-top: 24px; }
.si { display: block; height: 45px; line-height: 45px; padding-left: 48px; font-size: 20.300px; color: #545b64; white-space: nowrap; }
.sh { height: 45px; margin: 18px 0 1px; display: flex; align-items: center; padding-left: 20px; font-size: 20px; font-weight: 700; color: #545b64; }
.sh:last-child { margin-top: 17px; }
.sh-t { width: 14px; height: 14px; color: #545b64; margin-right: 12px; }

.vbar { flex: none; display: flex; flex-direction: column; align-items: center; background: #f1f1f1; }
.vbar .arr { width: 0; height: 0; border: 6px solid transparent; border-top: 0; border-bottom: 7px solid #a3a3a3; margin-top: 11px; flex: none; }
.vbar .thumb { display: block; background: #c1c1c1; width: 100%; }
.vbar-side { width: 22px; }
.vbar-side .thumb { margin-top: 8px; height: 353px; }
.side-gap { flex: none; background: #f2f3f3; border-left: 1px solid #d5dbdb; margin-left: 3px; width: 5px; }

/* content */
.content { width: 1469px; flex: none; display: flex; flex-direction: column; overflow: hidden; border-right: 2px solid #d5dbdb; }
.top-panel { width: 1463px; height: 284px; background: #fafafa; flex: none; overflow: hidden; border-right: 1px solid #d5dbdb; }
.band { height: 33px; flex: none; border-bottom: 3px solid #545b64; }
.phead { height: 153px; padding: 22px 29px 0 30px; border-bottom: 1px solid #eaeded; }
.card .phead { height: 151px; padding: 20px 30px 0 30px; }
.prow { display: flex; align-items: center; height: 44px; }
.prow-2 { margin-top: 18px; height: 45px; justify-content: space-between; }
.ttl { margin: -2px 0 0; font-size: 25.800px; font-weight: 700; color: #16191f; white-space: nowrap; }
.cnt { font-weight: 400; font-size: 27.500px; color: #687078; }
.info { margin-left: 17px; font-size: 17px; font-weight: 700; color: #0073bb; margin-top: 4px; }
.btns { margin-left: auto; display: flex; gap: 15px; height: 44px; }
.btn { font: 700 20.600px "Noto Sans", sans-serif; color: #545b64; background: #fff; border: 1px solid #545b64; border-radius: 2px; padding: 0; height: 44px; display: flex; align-items: center; justify-content: center; white-space: nowrap; }
.btn-ic { width: 71px; }
.b-ref { width: 27px; height: 27px; color: #545b64; }
.b-tri { width: 15px; height: 13px; color: #545b64; }
.btn-act { width: 168px; gap: 18px; }
.split { display: flex; }
.btn-exp { width: 366px; }
.btn-dd { width: 56px; border-left: 0; }
.btn-pri { width: 281px; background: #f90; border-color: #f90; color: #16191f; }
.btn-mng { width: 191px; color: #aab7b8; border-color: #d5dbdb; background: #fff; }
.btn-edit { width: 250px; }
.filter { height: 45px; background: #fff; border: 1px solid #aab7b8; border-radius: 2px; display: flex; align-items: center; padding-left: 15px; }
.filter-a { width: 1091px; }
.filter-b { width: 1092px; }
.f-i { width: 22px; height: 22px; color: #545b64; flex: none; }
.f-t { margin-left: 14px; font-size: 20.900px; font-style: italic; color: #879596; white-space: nowrap; }
.pager-a { display: flex; align-items: center; height: 45px; }
.p-ar { width: 14px; height: 24px; color: #aab7b8; flex: none; }
.p-n { width: 76px; text-align: center; font-size: 20px; font-weight: 700; }
.p-div { width: 1px; height: 45px; background: #eaeded; margin: 0 25px 0 24px; }
.p-gear { width: 24px; height: 24px; color: #545b64; flex: none; margin-right: 1px; }

/* tables */
.tr { display: grid; font-size: 21px; }
.sgcols { grid-template-columns: 81px 270px 315px 300px 338px 1fr; }
.rcols { grid-template-columns: 81.500px 269.500px 300px 300px 300px 1fr; }
.td { display: flex; align-items: center; padding-right: 28px; white-space: nowrap; overflow: hidden; min-width: 0; }
.td-c { padding-left: 30px; padding-right: 0; }
.td:not(.td-c)::before { content: ""; width: 1px; height: 31px; flex: none; margin-right: 28px; background: transparent; }
.thead { height: 63px; font-size: 20px; font-weight: 700; color: #545b64; border-bottom: 1px solid #eaeded; padding-bottom: 2px; }
.thead .td:not(.td-c)::before { background: #eaeded; margin-right: 30px; }
.thead .chk { margin-top: -3px; }
.ftr { width: 15px; height: 15px; color: #687078; margin-left: auto; flex: none; }
.tsel { height: 45px; background: #f1faff; border: 2px solid #00a1c9; border-right: 0; padding-bottom: 2px; }
.tsel .td-c { padding-left: 28px; }
.tsel .chk { margin-top: -2px; }
.chk { width: 21px; height: 21px; flex: none; }
.td-link { color: #0073bb; }
.td-clip { padding-right: 0; }
.hbar { height: 21px; margin-top: 2px; background: #f1f1f1; display: flex; align-items: center; }
.h-l { width: 0; height: 0; border: 6px solid transparent; border-left: 0; border-right: 7px solid #545b64; margin-left: 9px; }
.h-th { width: 827px; height: 21px; background: #c1c1c1; margin-left: 9px; }
.h-r { width: 0; height: 0; border: 6px solid transparent; border-right: 0; border-left: 7px solid #545b64; margin-left: auto; margin-right: 9px; }

/* bottom panel */
.bottom-panel { flex: 1; min-height: 0; display: flex; flex-direction: column; }
.split-head { height: 55px; flex: none; display: flex; align-items: center; }
.handle { width: 26px; height: 8px; border-top: 2px solid #aab7b8; border-bottom: 2px solid #aab7b8; margin: 0 0 6px 627px; }
.lays { margin-left: auto; display: flex; gap: 35px; padding-right: 30px; margin-top: 3px; }
.lay { width: 24px; height: 24px; color: #545b64; }
.tabline { height: 1px; margin-left: 18px; width: 1401px; background: #aab7b8; flex: none; position: relative; }
.tabline-on { display: block; width: 197px; height: 3px; margin-left: 131px; background: #16191f; transform: translateY(-3px); }
.split-body { flex: 1; min-height: 0; display: flex; }
.card { width: 1404px; margin: 58px 0 0 17px; background: #fafafa; flex: none; border-left: 1px solid #e2e4e4; border-right: 1px solid #d5dbdb; border-top: 1px solid #eaeded; }
.card .thead { height: 62px; padding-bottom: 0; }
.trow { height: 45px; background: #fafafa; border-bottom: 1px solid #eaeded; align-items: stretch; }
.box { width: 20px; height: 21px; background: #fff; border: 1px solid #aab7b8; border-radius: 2px; flex: none; }
.card .thead .box { margin-top: -2px; }
.card-thumb { width: 773px; height: 3px; background: #c1c1c1; margin: 1px 0 0 24px; }
.vbar-in { width: 22px; margin-left: 25px; background: #f2f3f3; }
.vbar-in .arr { border-bottom-color: #545b64; margin-top: 8px; }
.vbar-in .thumb { margin-top: 111px; flex: 1; }

/* rail */
.rail { width: 60px; background: #fff; flex: none; display: flex; justify-content: center; padding: 20px 0 0 0; }
.rail-i { width: 24px; height: 24px; color: #545b64; }
.vbar-rail { width: 25px; padding-left: 2px; background: #fff; }
.vbar-rail .arr { border-bottom-color: #545b64; margin-top: 11px; }
.vbar-rail .thumb { margin-top: 4px; flex: 1; }

/* footer */
.awsfoot { height: 45px; background: #232f3e; color: #fff; display: flex; align-items: center; flex: none; padding-left: 24px; font-size: 17.200px; border-bottom: 1px solid #9aa8a8; }
.foot-i { width: 24px; height: 24px; color: #fff; flex: none; margin-right: 7px; }
.ft { white-space: nowrap; font-weight: 500; }
.ft-shell { width: 126px; }
.ft-fb { width: 114px; }
.ft-c { margin-left: auto; font-size: 16.900px; }
.ft-p { margin-left: 44px; font-size: 16.900px; }
.ft-tm { margin-left: 38px; font-size: 16.900px; }
.ft-ck { margin: 0 24px 0 38px; font-size: 16.900px; }

/* taskbar */
.taskbar { flex: 1; background: linear-gradient(90deg, #c9ebee, #cdecee 50%, #cbeaec); display: flex; align-items: center; position: relative; color: #222; }
.w-i { width: 38px; height: 44px; margin-left: 28px; flex: none; }
.w-t { margin: -3px 0 0 10px; font-size: 17.400px; line-height: 24px; width: 324px; color: #222; }
.w-d { color: #444; }
.win { width: 36px; height: 36px; flex: none; }
.t-search { width: 327px; height: 46px; margin-left: 21px; background: #eef9fa; border-radius: 23px; border: 1px solid #d5e5e6; border-bottom: 2px solid #b5cdce; display: flex; align-items: center; padding-left: 15px; flex: none; }
.ts-i { width: 24px; height: 24px; color: #222; flex: none; }
.ts-t { margin-left: 14px; font-size: 19px; color: #444; flex: 1; }
.ts-b { width: 30px; height: 36px; margin-right: 8px; flex: none; }
.apps { display: flex; margin-left: 4px; height: 72px; flex: none; }
.app { width: 66px; height: 72px; display: flex; align-items: center; justify-content: center; position: relative; flex: none; }
.app-i { width: 36px; height: 40px; }
.app-pink { background: linear-gradient(#fde8ea, #fde8ea) center 6px / 54px 58px no-repeat; }
.dot-r::after, .dot-g::after { content: ""; position: absolute; bottom: 2px; left: 29px; width: 8px; height: 8px; border-radius: 50%; }
.dot-r::after { background: #d32f2f; }
.dot-g::after { background: #7a8a8c; }
.app-on { background: linear-gradient(#e6f5f7, #e6f5f7) center 6px / 56px 60px no-repeat; }
.app-on::after { content: ""; position: absolute; bottom: 3px; left: 20px; width: 25px; height: 5px; border-radius: 3px; background: #2a8a9e; }
.mail-b { position: absolute; top: 7px; left: 35px; width: 30px; height: 30px; border-radius: 50%; background: #2a8a9e; color: #fff; font-size: 16px; line-height: 30px; text-align: center; }
.tray { display: flex; align-items: center; margin-left: 35px; flex: none; }
.tray-up { width: 16px; height: 10px; fill: none; stroke: #222; stroke-width: 1.800; }
.tray-sync { width: 26px; height: 30px; margin-left: 27px; }
.tray-i { width: 24px; height: 24px; margin-left: 12px; }
.tray-sync + .tray-i { margin-left: 24px; }
.clock { margin-left: auto; margin-top: -3px; text-align: right; font-size: 18px; line-height: 24px; color: #222; white-space: nowrap; }
.notif { width: 26px; height: 26px; border-radius: 50%; background: #2a8a9e; color: #fff; font-size: 14px; line-height: 26px; text-align: center; margin: 0 28px 0 11px; flex: none; }
```
